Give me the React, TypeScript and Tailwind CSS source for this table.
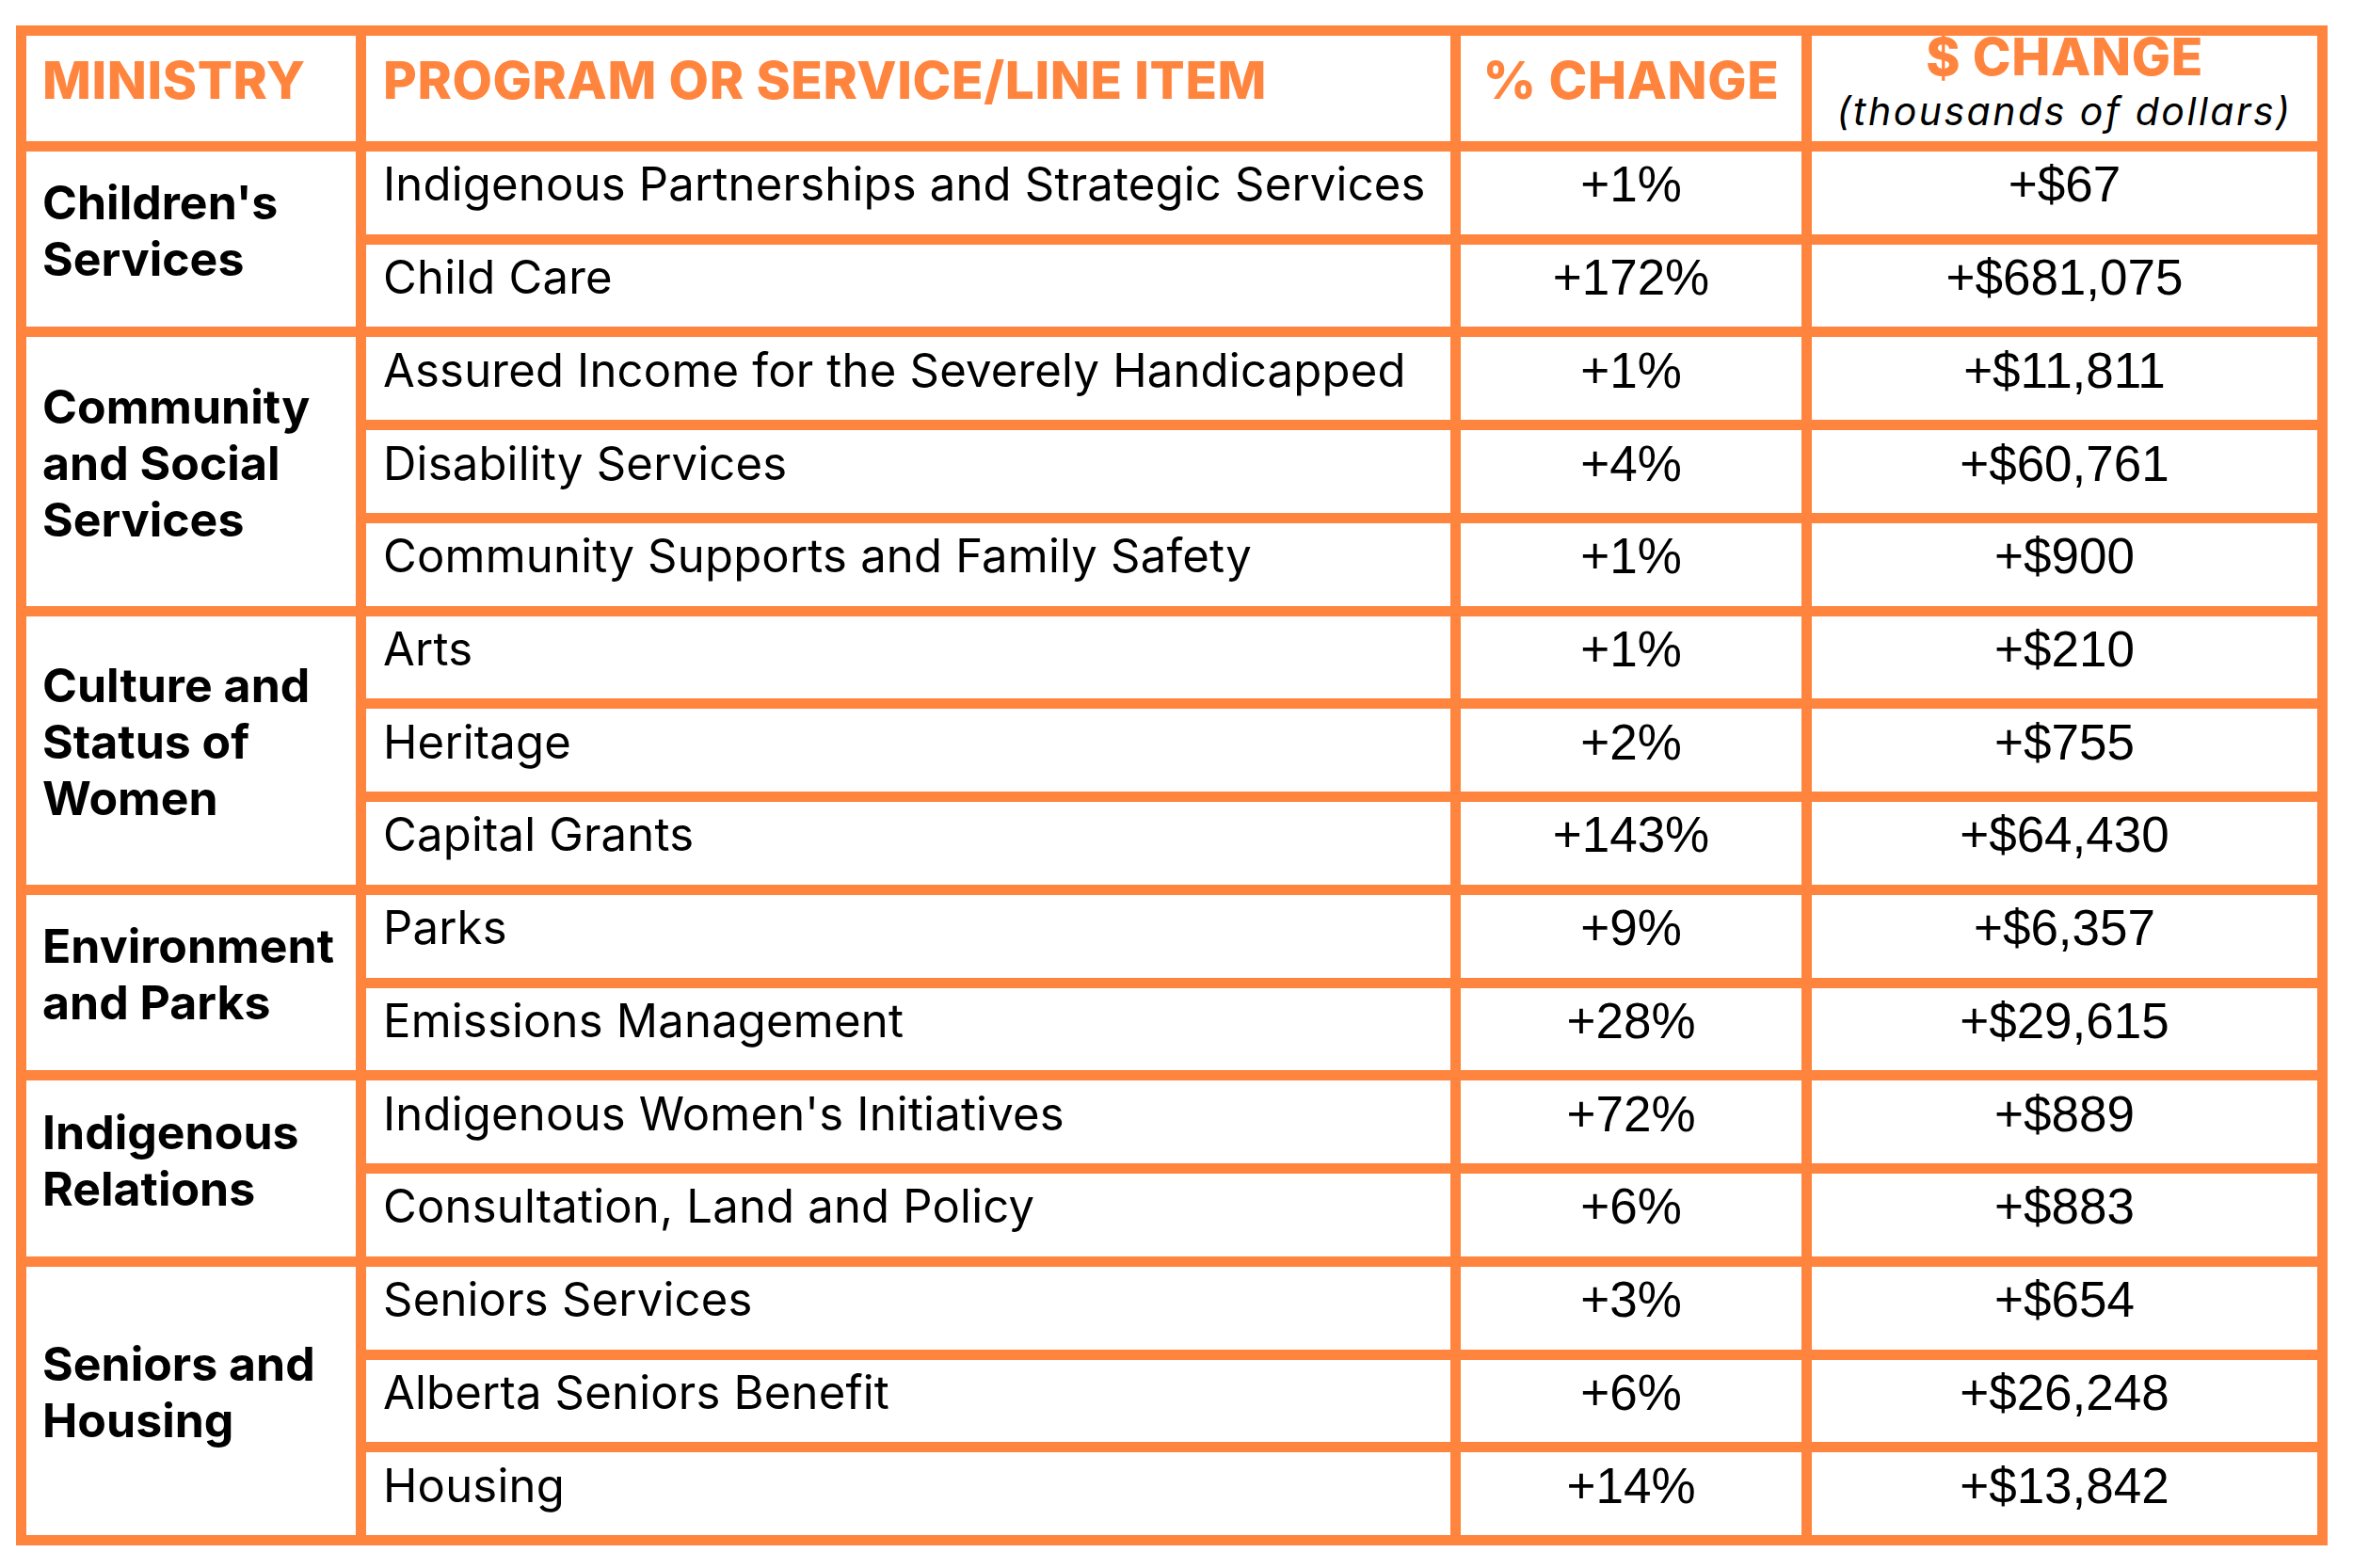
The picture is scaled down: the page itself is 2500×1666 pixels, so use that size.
import React from "react";

type Item = [string, string, string];
type Group = { m: string[]; items: Item[] };

const groups: Group[] = [
  {
    m: ["Children's", "Services"],
    items: [
      ["Indigenous Partnerships and Strategic Services", "+1%", "+$67"],
      ["Child Care", "+172%", "+$681,075"],
    ],
  },
  {
    m: ["Community", "and Social", "Services"],
    items: [
      ["Assured Income for the Severely Handicapped", "+1%", "+$11,811"],
      ["Disability Services", "+4%", "+$60,761"],
      ["Community Supports and Family Safety", "+1%", "+$900"],
    ],
  },
  {
    m: ["Culture and", "Status of", "Women"],
    items: [
      ["Arts", "+1%", "+$210"],
      ["Heritage", "+2%", "+$755"],
      ["Capital Grants", "+143%", "+$64,430"],
    ],
  },
  {
    m: ["Environment", "and Parks"],
    items: [
      ["Parks", "+9%", "+$6,357"],
      ["Emissions Management", "+28%", "+$29,615"],
    ],
  },
  {
    m: ["Indigenous", "Relations"],
    items: [
      ["Indigenous Women's Initiatives", "+72%", "+$889"],
      ["Consultation, Land and Policy", "+6%", "+$883"],
    ],
  },
  {
    m: ["Seniors and", "Housing"],
    items: [
      ["Seniors Services", "+3%", "+$654"],
      ["Alberta Seniors Benefit", "+6%", "+$26,248"],
      ["Housing", "+14%", "+$13,842"],
    ],
  },
];

const spanClass: Record<number, string> = {
  2: "row-span-2",
  3: "row-span-3",
};

const headCls =
  "bg-white flex items-center pb-[18px] font-['Inter',sans-serif] font-extrabold text-[55px] leading-none tracking-[0.6px] text-[#FF853E]";

export default function App() {
  return (
    <div className="bg-white w-[2500px] h-[1666px] pl-[17px] pt-[27px]">
      <div className="grid w-[2456px] h-[1615px] grid-cols-[350px_1152px_362px_537px] grid-rows-[112px_repeat(15,minmax(0,1fr))] gap-[11px] p-[11px] bg-[#FF853E]">
        <div className={`${headCls} pl-[17px]`}>MINISTRY</div>
        <div className={`${headCls} pl-[18px]`}>PROGRAM OR SERVICE/LINE ITEM</div>
        <div className={`${headCls} justify-center`}>% CHANGE</div>
        <div className="bg-white flex flex-col items-center justify-center gap-[10px] pb-[16px]">
          <div className="font-['Inter',sans-serif] font-extrabold text-[55px] leading-none tracking-[0.6px] text-[#FF853E]">
            $ CHANGE
          </div>
          <div className="font-['Inter',sans-serif] italic text-[41px] leading-none tracking-[2.5px] text-black">
            (thousands of dollars)
          </div>
        </div>
        {groups.map((g, gi) => (
          <React.Fragment key={gi}>
            <div
              className={`${spanClass[g.items.length]} col-start-1 bg-white flex flex-col justify-center pb-[18px] pl-[17px] font-['Inter',sans-serif] font-bold text-[50px] leading-[60px] text-black`}
            >
              {g.m.map((l, li) => (
                <div key={li}>{l}</div>
              ))}
            </div>
            {g.items.map((it, ii) => (
              <React.Fragment key={ii}>
                <div className="col-start-2 bg-white flex items-center pb-[18px] pl-[18px] font-['Inter',sans-serif] text-[49px] leading-none tracking-[0.2px] text-black whitespace-nowrap">
                  {it[0]}
                </div>
                <div className="col-start-3 bg-white flex items-center justify-center pb-[18px] font-['Liberation_Sans',Arial,sans-serif] text-[53px] leading-none text-black">
                  {it[1]}
                </div>
                <div className="col-start-4 bg-white flex items-center justify-center pb-[18px] font-['Liberation_Sans',Arial,sans-serif] text-[53px] leading-none text-black">
                  {it[2]}
                </div>
              </React.Fragment>
            ))}
          </React.Fragment>
        ))}
      </div>
    </div>
  );
}
